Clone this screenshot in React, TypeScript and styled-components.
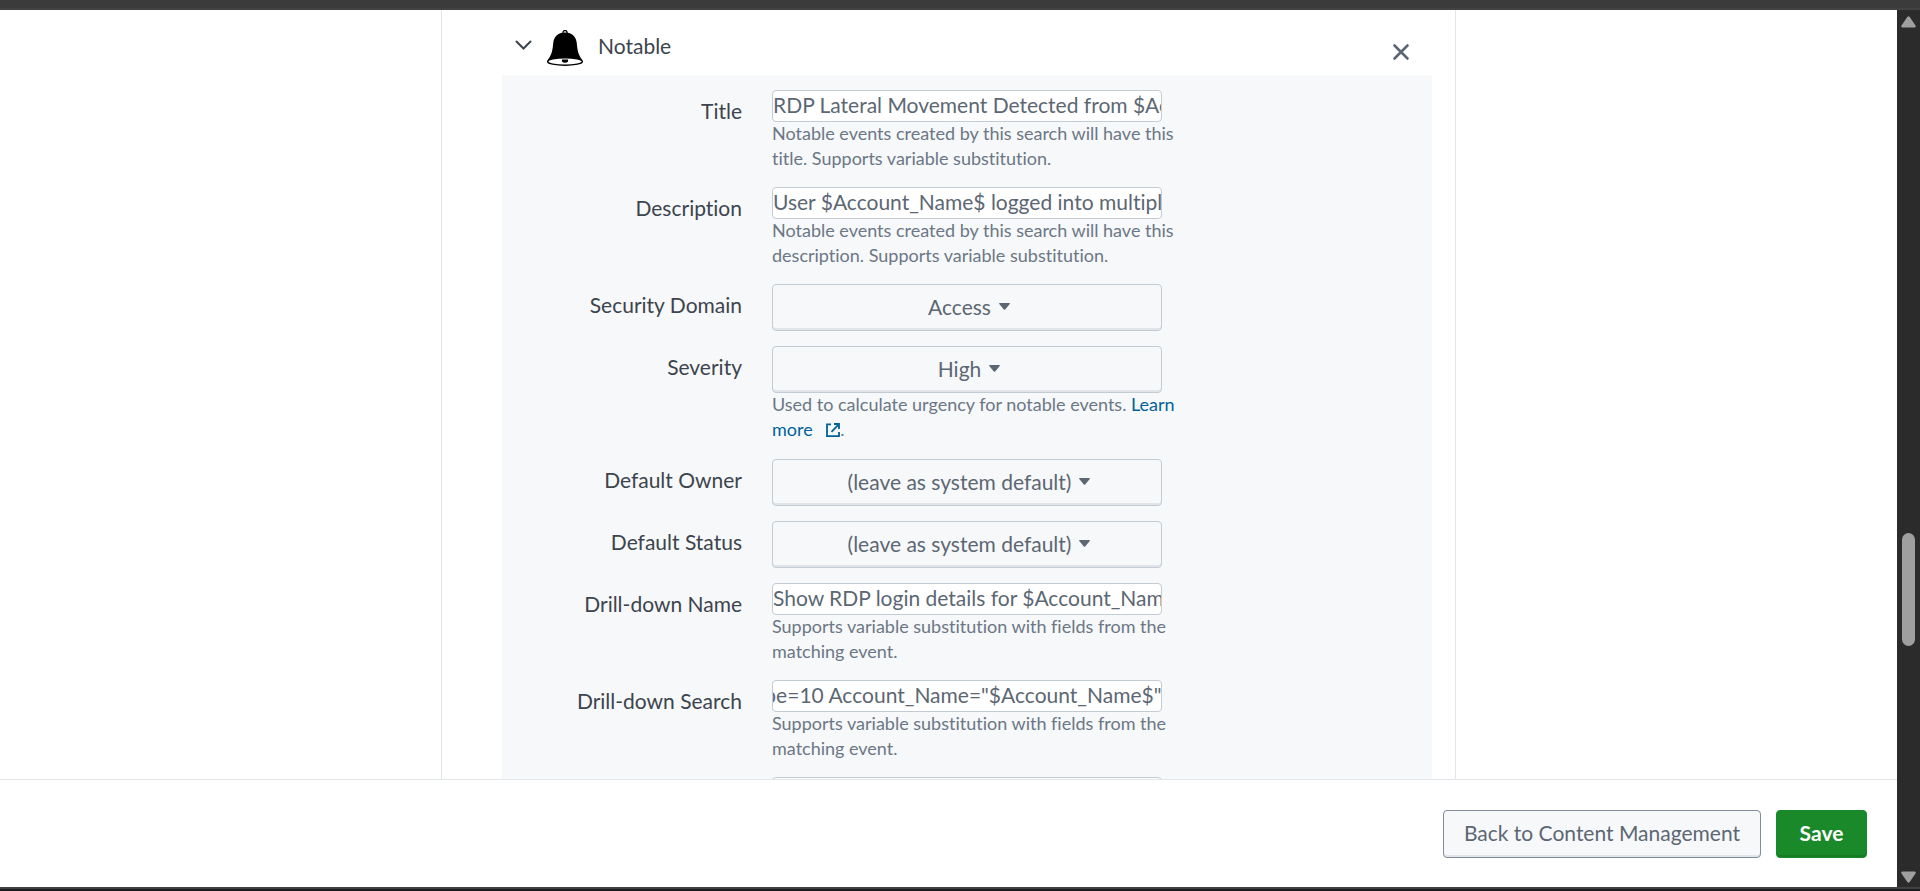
import React, { useEffect, useId, useRef } from "react";
import styled, { createGlobalStyle } from "styled-components";

const GlobalStyle = createGlobalStyle`
  *, *::before, *::after { box-sizing: border-box; }
  body {
    margin: 0;
    overflow: hidden;
    background: #ffffff;
    color: #3c444d;
    font-family: Lato, "Open Sans", sans-serif;
    font-size: 21px;
    font-variant-ligatures: none;
    line-height: 30px;
  }
  button, input, select { font: inherit; font-variant-ligatures: none; }
`;

const Shell = styled.div`
  display: flex;
  flex-direction: column;
  height: 100vh;
`;

const TopEdge = styled.div`
  flex: none;
  height: 10px;
  background: #3b3b3b;
  border-bottom: 2px solid #424242;
`;

const BottomEdge = styled.div`
  flex: none;
  height: 4px;
  background: #1b1d1f;
  border-top: 2px solid #424242;
`;

const Viewport = styled.div`
  display: flex;
  flex: 1;
  min-height: 0;
`;

const Page = styled.div`
  display: flex;
  flex: 1;
  flex-direction: column;
  min-width: 0;
`;

const Content = styled.main`
  flex: 1;
  min-height: 0;
  overflow: hidden;
`;

const Card = styled.section`
  max-width: 1015px;
  margin: 0 auto;
  padding: 0 23px 0 60px;
  border: solid #e1e6eb;
  border-width: 0 1px;
`;

const CardHeader = styled.header`
  display: flex;
  align-items: center;
  height: 65px;
  padding: 0 22px 0 13px;
`;

const IconButton = styled.button`
  display: flex;
  padding: 4px 0 0;
  border: 0;
  background: none;
  color: ${(p) => p.color};
  cursor: pointer;
`;

const CloseButton = styled(IconButton)`
  margin: 20px 0 0 auto;
  align-self: flex-start;
  padding-top: 13px;
`;

const BellIcon = styled.svg`
  margin: 10px 15px 0;
  flex: none;
`;

const CardTitle = styled.h2`
  margin: 0;
  padding-top: 6px;
  font-size: 21px;
  font-weight: 400;
`;

const Form = styled.form`
  display: flex;
  flex-direction: column;
  gap: 15px;
  padding: 15px 0 60px;
  background: #f7f8fa;
`;

const FieldRow = styled.div`
  display: grid;
  grid-template-columns: 240px minmax(0, 415px);
  column-gap: 30px;
`;

const FieldLabel = styled.label`
  padding-top: 6px;
  text-align: right;
`;

const TextInput = styled.input`
  display: block;
  width: 100%;
  max-width: 390px;
  height: 32px;
  padding: 0 0 4px;
  border: 1px solid #c3cbd4;
  border-radius: 4px;
  background: #ffffff;
  color: #5c6773;
  outline: none;
`;

const SelectBox = styled.div`
  display: flex;
  align-items: center;
  justify-content: center;
  gap: 8px;
  max-width: 390px;
  height: 47px;
  padding: 0 0 2px 4px;
  border: 1px solid #c3cbd4;
  border-radius: 4px;
  background: #f7f8fa;
  box-shadow: inset 0 -2px 0 #e1e4e8;
  color: #5c6773;
`;

const Select = styled.select`
  field-sizing: content;
  appearance: none;
  padding: 0;
  border: 0;
  background: none;
  color: inherit;
  outline: none;
`;

const Help = styled.p`
  margin: -1px 0 1px;
  color: #6b7785;
  font-size: 18px;
  line-height: 25px;
`;

const SeverityHelp = styled(Help)`
  min-height: 51px;
`;

const HelpLink = styled.a`
  color: #006297;
  text-decoration: none;

  svg {
    margin-left: 9px;
    vertical-align: -1px;
  }
`;

const Footer = styled.footer`
  display: flex;
  flex: none;
  align-items: flex-start;
  justify-content: flex-end;
  gap: 15px;
  height: 108px;
  padding: 30px 30px 0;
  border-top: 1px solid #e1e6eb;
  background: #ffffff;
`;

const FooterButton = styled.button<{ $primary?: boolean }>`
  min-width: 91px;
  height: 48px;
  padding: 0 20px 2px;
  border: 1px solid ${(p) => (p.$primary ? "#1a8929" : "#818d99")};
  border-radius: 4px;
  background: ${(p) => (p.$primary ? "#1a8929" : "#f7f8fa")};
  box-shadow: inset 0 -2px 0 ${(p) => (p.$primary ? "#187b25" : "#e1e4e8")};
  color: ${(p) => (p.$primary ? "#ffffff" : "#5c6773")};
  font-weight: ${(p) => (p.$primary ? 700 : 400)};
  cursor: pointer;
`;

const Scrollbar = styled.div`
  display: flex;
  flex: none;
  flex-direction: column;
  align-items: center;
  width: 23px;
  padding: 6px 0 4px;
  background: #2b2b2b;
`;

const Track = styled.div`
  display: grid;
  grid-template-rows: 506fr 113fr 225fr;
  flex: 1;
  width: 13px;
`;

const Thumb = styled.div`
  grid-row: 2;
  border-radius: 7px;
  background: #9f9f9f;
`;

type FieldProps = {
  label: string;
  value: string;
  help?: React.ReactNode;
};

function TextField({ label, value, help, scrollToEnd }: FieldProps & { scrollToEnd?: boolean }) {
  const id = useId();
  const ref = useRef<HTMLInputElement>(null);

  useEffect(() => {
    if (scrollToEnd && ref.current) ref.current.scrollLeft = ref.current.scrollWidth;
  }, [scrollToEnd]);

  return (
    <FieldRow>
      <FieldLabel htmlFor={id}>{label}</FieldLabel>
      <div>
        <TextInput id={id} ref={ref} type="text" defaultValue={value} spellCheck={false} />
        {help}
      </div>
    </FieldRow>
  );
}

function SelectField({ label, value, help }: FieldProps) {
  const id = useId();
  return (
    <FieldRow>
      <FieldLabel htmlFor={id}>{label}</FieldLabel>
      <div>
        <SelectBox>
          <Select id={id} defaultValue={value}>
            <option>{value}</option>
          </Select>
          <svg width="11" height="7" viewBox="0 0 11 7" aria-hidden="true">
            <path d="M0.7 0h9.600q1 0 .4.900L6.200 6.400q-.7.900-1.400 0L.3.900Q-.3 0 .7 0z" fill="currentColor" />
          </svg>
        </SelectBox>
        {help}
      </div>
    </FieldRow>
  );
}

function Bell() {
  return (
    <BellIcon width="36" height="36" viewBox="0 0 36 36" aria-hidden="true">
      <circle cx="18" cy="2.600" r="2.100" fill="none" stroke="#000" strokeWidth="1.300" />
      <path
        d="M18 2.400C10.500 2.400 7 7 6.300 12.500 5.600 19 5.300 24.500 0.600 30c3 3.600 31.800 3.600 34.800 0C30.700 24.500 30.400 19 29.700 12.500 29 7 25.500 2.400 18 2.400z"
        fill="#000"
      />
      <ellipse cx="18" cy="31.500" rx="17.300" ry="3.700" fill="#fff" stroke="#000" strokeWidth="1.500" />
      <path d="M15 29.600h6q.8 3.200-3 3.200t-3-3.200z" fill="#000" />
    </BellIcon>
  );
}

function ExternalIcon() {
  return (
    <svg width="14" height="14" viewBox="0 0 14 14" fill="none" stroke="currentColor" strokeWidth="1.800" aria-hidden="true">
      <path d="M5 1.400H1v11.700h12V9" />
      <path d="M8 1h5v5M12.700 1.300L5.500 8.800" />
    </svg>
  );
}

export default function App() {
  const matchingHelp = <Help>Supports variable substitution with fields from the matching event.</Help>;

  return (
    <Shell>
      <GlobalStyle />
      <TopEdge />
      <Viewport>
        <Page>
          <Content>
            <Card>
              <CardHeader>
                <IconButton type="button" color="#3c444d" aria-label="Collapse">
                  <svg width="17" height="10" viewBox="0 0 17 10" fill="none" stroke="currentColor" strokeWidth="2" strokeLinecap="round">
                    <path d="M1.500 1.500l7 7 7-7" />
                  </svg>
                </IconButton>
                <Bell />
                <CardTitle>Notable</CardTitle>
                <CloseButton type="button" color="#5c6773" aria-label="Remove">
                  <svg width="18" height="18" viewBox="0 0 18 18" fill="none" stroke="currentColor" strokeWidth="2.600" strokeLinecap="round">
                    <path d="M2.500 2.500l13 13M15.500 2.500l-13 13" />
                  </svg>
                </CloseButton>
              </CardHeader>
              <Form>
                <TextField
                  label="Title"
                  value="RDP Lateral Movement Detected from $Account_Name$"
                  help={<Help>Notable events created by this search will have this title. Supports variable substitution.</Help>}
                />
                <TextField
                  label="Description"
                  value="User $Account_Name$ logged into multiple hosts"
                  help={<Help>Notable events created by this search will have this description. Supports variable substitution.</Help>}
                />
                <SelectField label="Security Domain" value="Access" />
                <SelectField
                  label="Severity"
                  value="High"
                  help={
                    <SeverityHelp>
                      Used to calculate urgency for notable events.{" "}
                      <HelpLink href="#">
                        Learn more <ExternalIcon />
                      </HelpLink>
                      .
                    </SeverityHelp>
                  }
                />
                <SelectField label="Default Owner" value="(leave as system default)" />
                <SelectField label="Default Status" value="(leave as system default)" />
                <TextField label="Drill-down Name" value="Show RDP login details for $Account_Name$" help={matchingHelp} />
                <TextField
                  label="Drill-down Search"
                  value={'index=wineventlog Logon_Type=10 Account_Name="$Account_Name$"'}
                  help={matchingHelp}
                  scrollToEnd
                />
                <TextField label="" value="" />
              </Form>
            </Card>
          </Content>
          <Footer>
            <FooterButton type="button">Back to Content Management</FooterButton>
            <FooterButton type="button" $primary>
              Save
            </FooterButton>
          </Footer>
        </Page>
        <Scrollbar aria-hidden="true">
          <svg width="15" height="12" viewBox="0 0 15 12">
            <path d="M6.300 1q1.200-1.600 2.400 0l5.800 8.500q.8 1.900-1 1.900H1.500q-1.800 0-1-1.900z" fill="#9f9f9f" />
          </svg>
          <Track>
            <Thumb />
          </Track>
          <svg width="15" height="12" viewBox="0 0 15 12">
            <path d="M6.300 11q1.200 1.600 2.400 0l5.800-8.500q.8-1.900-1-1.900H1.500q-1.800 0-1 1.900z" fill="#9f9f9f" />
          </svg>
        </Scrollbar>
      </Viewport>
      <BottomEdge />
    </Shell>
  );
}
